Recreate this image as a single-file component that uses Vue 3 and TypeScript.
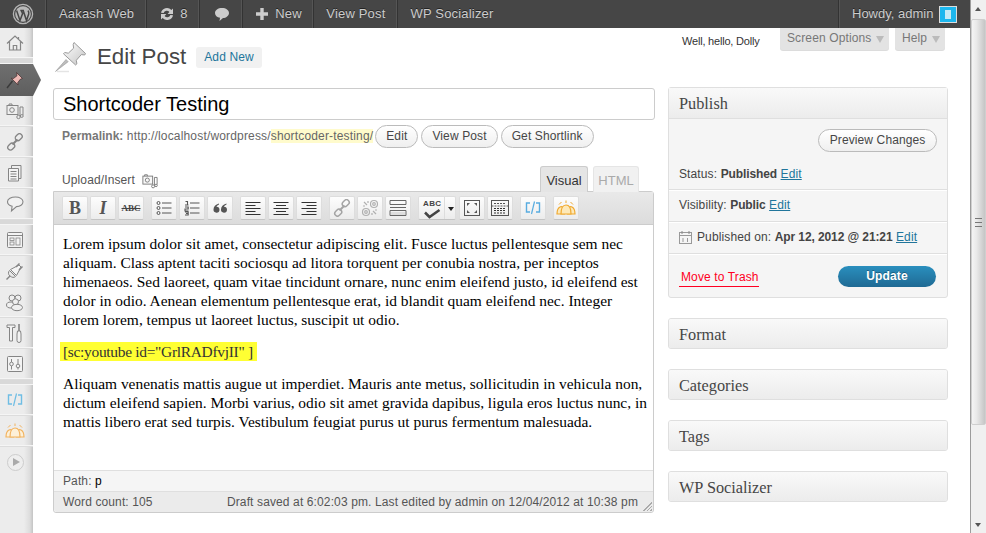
<script setup lang="ts">
const adminLinks: string[] = ['View Post', 'WP Socializer']
const boxes: string[] = ['Format', 'Categories', 'Tags', 'WP Socializer']
</script>

<template>
  <div class="shell">
    <div class="page">
      <header class="adminbar">
        <div class="ab-item ab-logo">
          <svg width="22" height="22" viewBox="0 0 22 22">
            <circle cx="11" cy="11" r="9.6" fill="none" stroke="#b5b5b5" stroke-width="1.3" />
            <circle cx="11" cy="11" r="7.8" fill="#b9b9b9" />
            <path d="M4.6 7.6 8 17.6l2.6-7-1.4-3.4M8.3 7.4h3.6M11.2 7.6l3.3 10 2.2-6.6c.5-1.6-.2-2.6-.7-3.4" fill="none" stroke="#464646" stroke-width="1.5" />
          </svg>
        </div>
        <div class="ab-item ab-site">Aakash Web</div>
        <div class="ab-item ab-updates">
          <svg width="16" height="16" viewBox="0 0 16 16">
            <path d="M2 6.8A6 6 0 0 1 12.4 4L14 2.4V8H8.6l1.8-1.9A3.3 3.3 0 0 0 4.6 7Z" fill="#ccc" />
            <path d="M14 9.2A6 6 0 0 1 3.6 12L2 13.6V8h5.4l-1.8 1.9A3.3 3.3 0 0 0 11.4 9Z" fill="#ccc" />
          </svg>
          <span>8</span>
        </div>
        <div class="ab-item ab-comments">
          <svg width="16" height="15" viewBox="0 0 16 15">
            <path d="M8 1c4 0 7 2.100 7 5s-3 5-6 5l-3.500 3 .5-3.200C3 10.300 1 8.500 1 6c0-2.900 3-5 7-5Z" fill="#ccc" />
          </svg>
        </div>
        <div class="ab-item ab-new">
          <svg width="12" height="12" viewBox="0 0 12 12"><path d="M4.300 0h3.400v4.300H12v3.400H7.700V12H4.300V7.700H0V4.300h4.300Z" fill="#ccc" /></svg>
          <span>New</span>
        </div>
        <div v-for="(link, i) in adminLinks" :key="link" class="ab-item" :class="{ 'ab-plain': i === adminLinks.length - 1 }">{{ link }}</div>
        <div class="ab-howdy">
          <span>Howdy, admin</span>
          <span class="avatar"><i></i></span>
        </div>
      </header>

      <div class="body-row">
        <nav class="menu">
          <div class="mi">
            <svg width="18" height="18" viewBox="0 0 18 18"><path d="M1 9.500 9 2l8 7.500M3.500 7.500V16h11V7.500M7.300 16v-4.500h3.400V16M12.500 3v2.500" fill="#efefef" stroke="#858585" stroke-width="1.200" /></svg>
          </div>
          <div class="mi-sep"></div>
          <div class="mi mi-active">
            <svg width="18" height="18" viewBox="0 0 18 18"><path d="M1 17 6.500 10" stroke="#3a3a3a" stroke-width="1.500" /><path d="M10.500 1.500 16.500 7.500l-2 .6-2.800 3.600.4 2.300-6.900-6.800 2.300.3 3.500-2.800Z" fill="#eeb9b5" stroke="#4b3535" stroke-width=".8" /></svg>
          </div>
          <div class="mi">
            <svg width="18" height="18" viewBox="0 0 18 18"><rect x="1" y="3.500" width="11" height="9" fill="#efefef" stroke="#858585" /><circle cx="6" cy="8" r="2.300" fill="none" stroke="#858585" /><path d="M3 3.500V2h3v1.500M14 5h3v8M14 5v9" fill="none" stroke="#858585" /><circle cx="12.500" cy="15" r="1.700" fill="none" stroke="#858585" /><circle cx="15.800" cy="14" r="1.400" fill="none" stroke="#858585" /></svg>
          </div>
          <div class="mi">
            <svg width="18" height="18" viewBox="0 0 18 18"><g fill="none" stroke="#858585" stroke-width="1.300"><rect x="9" y="1.500" width="7.500" height="5.400" rx="2.700" transform="rotate(-45 12.700 4.200)" /><rect x="1.500" y="11" width="7.500" height="5.400" rx="2.700" transform="rotate(-45 5.200 13.700)" /><path d="M6.500 11.500 11.500 6.500" stroke-width="2" /></g></svg>
          </div>
          <div class="mi">
            <svg width="18" height="18" viewBox="0 0 18 18"><path d="M5.500 4.500V1.500H15v13h-2.500" fill="#eee" stroke="#858585" /><path d="M2.500 4.500H12.500V17H2.500Z" fill="#f5f5f5" stroke="#858585" /><path d="M4.500 7.500h6M4.500 10h6M4.500 12.500h6M4.500 15h6" stroke="#858585" /></svg>
          </div>
          <div class="mi">
            <svg width="18" height="18" viewBox="0 0 18 18"><path d="M9.500 2c4.200 0 7.500 2 7.500 4.800s-3 4.800-6.500 4.800L5.500 16l.6-4.800C3.300 10.500 1.500 8.900 1.500 6.800 1.500 4 5.200 2 9.500 2Z" fill="#f1f1f1" stroke="#858585" stroke-width="1.100" /></svg>
          </div>
          <div class="mi-sep"></div>
          <div class="mi">
            <svg width="18" height="18" viewBox="0 0 18 18"><rect x="1.500" y="1.500" width="15" height="15" rx="1" fill="#f3f3f3" stroke="#858585" /><path d="M1.500 4.500h15" stroke="#858585" /><rect x="4" y="7" width="4" height="2.500" fill="none" stroke="#858585" stroke-width=".8" /><rect x="4" y="11" width="4" height="3" fill="none" stroke="#858585" stroke-width=".8" /><rect x="10" y="7" width="4" height="7" fill="none" stroke="#858585" stroke-width=".8" /></svg>
          </div>
          <div class="mi">
            <svg width="20" height="20" viewBox="0 0 20 20"><path d="M1.500 18.500 5 15" stroke="#858585" stroke-width="1.400" /><path d="M4.500 9.500 10.500 15.500C9 17 7 16.500 5 15S3 11 4.500 9.500Z" fill="#e9e9e9" stroke="#858585" /><path d="M5.500 8.500 14 4l2 2-4.500 8.500Z" fill="#f5f5f5" stroke="#858585" /><path d="M11 6 14.500 2.500M14 9l3.500-3.500" stroke="#858585" stroke-width="1.500" /></svg>
          </div>
          <div class="mi">
            <svg width="20" height="20" viewBox="0 0 20 20"><g fill="#efefef" stroke="#858585"><circle cx="7" cy="6" r="3" /><circle cx="13" cy="6" r="3" /><ellipse cx="6" cy="13" rx="4.500" ry="3" /><circle cx="10.500" cy="9.800" r="3" /><ellipse cx="12" cy="15.500" rx="5.500" ry="3.200" /></g></svg>
          </div>
          <div class="mi">
            <svg width="18" height="20" viewBox="0 0 18 20"><g fill="none" stroke="#858585"><path d="M1 2h8M1 2v2.500h2.500V18h3V4.500H9V2" fill="#f2f2f2" /><path d="M13 1v7" stroke-width="1.600" /><path d="M11.500 8h3l.5 3v6.500a2 2 0 0 1-4 0V11Z" fill="#f2f2f2" /></g></svg>
          </div>
          <div class="mi">
            <svg width="18" height="18" viewBox="0 0 18 18"><rect x="1.500" y="1.500" width="15" height="15" rx="1" fill="#f3f3f3" stroke="#858585" /><path d="M5.500 4v3M5.500 11v3.500M12 4v5M12 13v1.500" stroke="#858585" /><circle cx="5.500" cy="9" r="1.800" fill="none" stroke="#858585" /><circle cx="12" cy="11" r="1.800" fill="none" stroke="#858585" /></svg>
          </div>
          <div class="mi-sep"></div>
          <div class="mi">
            <svg width="16" height="14" viewBox="0 0 16 14"><path d="M5 2H1.500v9H5M11 2h3.500v9H11" fill="none" stroke="#6fbde4" stroke-width="1.400" /><path d="M6.500 13 9.500 .5" stroke="#6fbde4" stroke-width="1.200" /></svg>
          </div>
          <div class="mi">
            <svg width="20" height="16" viewBox="0 0 20 16"><g fill="#fdf0d8" stroke="#f2b35f" stroke-width="1.200"><path d="M1 14c0-4 .9-6 3-7s5 1 4.500 7Z" /><path d="M11.500 14c-.5-6 2.500-8 4.500-7s3 3 3 7Z" /><path d="M5 14c0-6 2-9 5-9s5 3 5 9Z" /></g><path d="M3 4.500 5.500 2M10 .5v2.500M17 4.500 14.500 2" stroke="#f2b35f" /></svg>
          </div>
          <div class="mi mi-collapse">
            <span class="collapse-dot"></span>
          </div>
        </nav>

        <main class="main">
          <section class="col-left">
            <div class="heading">
              <svg class="big-pin" width="32" height="32" viewBox="0 0 32 32">
                <defs>
                  <linearGradient id="pinSteel" x1="0" y1="0" x2="1" y2="1">
                    <stop offset="0" stop-color="#ffffff" />
                    <stop offset="1" stop-color="#c4c4c4" />
                  </linearGradient>
                </defs>
                <path d="M14 30.500H2" stroke="#e4e4e4" stroke-width="1.500" />
                <path d="M.5 30.500 11 18.500l2.200 2.200Z" fill="#bdbdbd" stroke="#8c8c8c" stroke-width=".5" />
                <path d="M19 1.500 30.500 12.500l-.8 1.500-3.400-.4-5 5.700.6 3.500-1.300 1.200L8.500 12.800l1.200-1.300 3.600.7 5.300-5-.4-3.700Z" fill="url(#pinSteel)" stroke="#9a9a9a" />
              </svg>
              <h1>Edit Post</h1>
              <a class="add-new">Add New</a>
            </div>

            <div class="title-input">Shortcoder Testing</div>

            <div class="permalink">
              <strong>Permalink:</strong>
              <span class="url">&nbsp;http://localhost/wordpress/<mark>shortcoder-testing/</mark></span>
              <a class="pill pill-first">Edit</a>
              <a class="pill">View Post</a>
              <a class="pill">Get Shortlink</a>
            </div>

            <div class="editor-tools">
              <div class="upload">
                <span>Upload/Insert</span>
                <svg width="16" height="16" viewBox="0 0 18 18"><rect x="1" y="3.500" width="11" height="9" fill="#f8f8f8" stroke="#777" /><circle cx="6" cy="8" r="2.300" fill="none" stroke="#777" /><path d="M3 3.500V2h3v1.500M14 5h3v8M14 5v9" fill="none" stroke="#777" /><circle cx="12.500" cy="15" r="1.700" fill="none" stroke="#777" /><circle cx="15.800" cy="14" r="1.400" fill="none" stroke="#777" /></svg>
              </div>
              <div class="tabs">
                <span class="tab tab-on">Visual</span>
                <span class="tab">HTML</span>
              </div>
            </div>

            <div class="editor">
              <div class="toolbar">
                <div class="tb-group">
                  <button class="tb tb-letter">B</button>
                  <button class="tb tb-letter tb-i">I</button>
                  <button class="tb tb-abc">ABC</button>
                </div>
                <div class="tb-group">
                  <button class="tb"><svg width="16" height="16" viewBox="0 0 16 16"><g fill="none" stroke="#555"><circle cx="2.500" cy="3" r="1.500" /><circle cx="2.500" cy="8" r="1.500" /><circle cx="2.500" cy="13" r="1.500" /><path d="M6 3h9.500M6 8h9.500M6 13h9.500" /></g></svg></button>
                  <button class="tb"><svg width="16" height="16" viewBox="0 0 16 16"><g fill="none" stroke="#555"><path d="M6 3h9.500M6 8h9.500M6 13h9.500" /><path d="M1.500 1.500h2v3M1 5h3.500M1 7h3.200v2H1v2h3.500M1 12h3.200v1.500H2M4.200 13.500V15H1" stroke-width="1.100" /></g></svg></button>
                  <button class="tb"><svg width="14" height="10" viewBox="0 0 14 10"><path d="M6 .5C2.500 1.500.5 3.500.5 6.500a3 3 0 1 0 3-2.800C3.800 2.700 4.800 2 6 1.500ZM13.500 .5C10 1.500 8 3.500 8 6.500a3 3 0 1 0 3-2.800c.3-1 1.300-1.700 2.500-2.200Z" fill="#555" /></svg></button>
                </div>
                <div class="tb-group">
                  <button class="tb"><svg width="16" height="15" viewBox="0 0 16 15"><path d="M.5 1.500h15M.5 4.500h10M.5 7.500h15M.5 10.500h10M.5 13.500h15" stroke="#333" /></svg></button>
                  <button class="tb"><svg width="16" height="15" viewBox="0 0 16 15"><path d="M.5 1.500h15M3 4.500h10M.5 7.500h15M3 10.500h10M.5 13.500h15" stroke="#333" /></svg></button>
                  <button class="tb"><svg width="16" height="15" viewBox="0 0 16 15"><path d="M.5 1.500h15M5.500 4.500h10M.5 7.500h15M5.500 10.500h10M.5 13.500h15" stroke="#333" /></svg></button>
                </div>
                <div class="tb-group">
                  <button class="tb"><svg width="18" height="18" viewBox="0 0 18 18"><g fill="none" stroke="#a4a4a4" stroke-width="1.500"><rect x="9" y="1.500" width="7.500" height="5.400" rx="2.700" transform="rotate(-45 12.700 4.200)" /><rect x="1.500" y="11" width="7.500" height="5.400" rx="2.700" transform="rotate(-45 5.200 13.700)" /><path d="M6.500 11.500 11.500 6.500" stroke-width="2" /></g></svg></button>
                  <button class="tb"><svg width="18" height="18" viewBox="0 0 18 18"><g fill="none" stroke="#b0b0b0" stroke-width="1.200"><circle cx="13" cy="5" r="3.500" /><circle cx="13" cy="5" r="1.300" /><circle cx="5" cy="13" r="3.500" /><circle cx="5" cy="13" r="1.300" /><path d="M3 3l3 3M15 15l-3-3M7 2v2M2 7h2M11 16v-2M16 11h-2" /></g></svg></button>
                  <button class="tb"><svg width="18" height="16" viewBox="0 0 18 16"><path d="M1 .5h16M1 4.500h16M1 .5v4M17 .5v4M1 7.500h16M1 10.500h16M1 15.500h16M1 10.500v5M17 10.500v5" fill="none" stroke="#666" /><path d="M2 12h14v3H2Z" fill="#ddd" /></svg></button>
                </div>
                <div class="tb-group tb-group-wide">
                  <div class="tb-split">
                    <span class="tb-spell">
                      <svg width="18" height="18" viewBox="0 0 18 18"><path d="M2 11.500 6.500 16 16.500 9" fill="none" stroke="#444" stroke-width="2.500" /></svg>
                      <em>ABC</em>
                    </span>
                    <span class="tb-drop"></span>
                  </div>
                  <button class="tb"><svg width="16" height="16" viewBox="0 0 16 16"><rect x=".5" y=".5" width="15" height="15" fill="none" stroke="#555" /><path d="M3 3h3L3 6ZM13 3v3l-3-3ZM3 13v-3l3 3ZM13 13h-3l3-3Z" fill="#555" /></svg></button>
                  <button class="tb"><svg width="18" height="16" viewBox="0 0 18 16"><rect x=".5" y=".5" width="17" height="15" fill="none" stroke="#555" /><path d="M3 3.500h12M.5 6h17" stroke="#555" stroke-dasharray="2 1" /><path d="M3 8.500h12M3 10.500h12M3 13h12" stroke="#333" stroke-dasharray="2 1" /></svg></button>
                </div>
                <div class="tb-group">
                  <button class="tb"><svg width="16" height="14" viewBox="0 0 16 14"><path d="M5 2H1.500v9H5M11 2h3.500v9H11" fill="none" stroke="#58ace0" stroke-width="1.400" /><path d="M6.500 13 9.500 .5" stroke="#58ace0" stroke-width="1.200" /></svg></button>
                </div>
                <div class="tb-group">
                  <button class="tb"><svg width="20" height="18" viewBox="0 0 20 16"><g fill="#fde9b9" stroke="#f0a92f" stroke-width="1.200"><path d="M1 14c0-4 .9-6 3-7s5 1 4.500 7Z" /><path d="M11.500 14c-.5-6 2.500-8 4.500-7s3 3 3 7Z" /><path d="M5 14c0-6 2-9 5-9s5 3 5 9Z" /></g><path d="M3 4.500 5.500 2M10 .5v2.500M17 4.500 14.500 2" stroke="#f0a92f" /></svg></button>
                </div>
              </div>
              <div class="content">
                <p>Lorem ipsum dolor sit amet, consectetur adipiscing elit. Fusce luctus pellentesque sem nec<br>aliquam. Class aptent taciti sociosqu ad litora torquent per conubia nostra, per inceptos<br>himenaeos. Sed laoreet, quam vitae tincidunt ornare, nunc enim eleifend justo, id eleifend est<br>dolor in odio. Aenean elementum pellentesque erat, id blandit quam eleifend nec. Integer<br>lorem lorem, tempus ut laoreet luctus, suscipit ut odio.</p>
                <p class="code"><span>[sc:youtube id="GrlRADfvjII" ]</span></p>
                <p>Aliquam venenatis mattis augue ut imperdiet. Mauris ante metus, sollicitudin in vehicula non,<br>dictum eleifend sapien. Morbi varius, odio sit amet gravida dapibus, ligula eros luctus nunc, in<br>mattis libero erat sed turpis. Vestibulum feugiat purus ut purus fermentum malesuada.</p>
              </div>
              <div class="path">Path: <b>p</b></div>
              <div class="count">
                <span>Word count: 105</span>
                <span>Draft saved at 6:02:03 pm. Last edited by admin on 12/04/2012 at 10:38 pm</span>
                <i class="grip"></i>
              </div>
            </div>
          </section>

          <aside class="col-right">
            <div class="meta-strip">
              <span class="dolly">Well, hello, Dolly</span>
              <span class="meta-tab meta-opts">Screen Options<i></i></span>
              <span class="meta-tab meta-help">Help<i></i></span>
            </div>

            <div class="box publish">
              <h3>Publish</h3>
              <div class="pub-preview"><a class="pill pill-wide">Preview Changes</a></div>
              <div class="pub-row pub-status">Status: <b>Published</b> <a>Edit</a></div>
              <div class="pub-row">Visibility: <b>Public</b> <a>Edit</a></div>
              <div class="pub-row pub-date">
                <svg width="13" height="13" viewBox="0 0 13 13"><rect x=".5" y="1.500" width="12" height="11" fill="#f5f5f5" stroke="#999" /><path d="M.5 4.500h12" stroke="#999" /><path d="M3 0v3M10 0v3" stroke="#888" /><path d="M4 7v4M8.500 7v4" stroke="#999" /></svg>
                <span>Published on: <b>Apr 12, 2012 @ 21:21</b> <a>Edit</a></span>
              </div>
              <div class="pub-actions">
                <a class="trash">Move to Trash</a>
                <a class="update">Update</a>
              </div>
            </div>

            <div v-for="box in boxes" :key="box" class="box closed"><h3>{{ box }}</h3></div>
          </aside>
        </main>
      </div>
    </div>

    <div class="scrollbar">
      <i class="arrow-up"></i>
      <div class="thumb"><span></span></div>
      <i class="arrow-down"></i>
    </div>
  </div>
</template>

<style>
html, body { margin: 0; background: #fff; overflow: hidden; }
</style>

<style scoped>
.shell { display: flex; width: 986px; height: 533px; overflow: hidden; background: #fff; font: 12px/1.4 "Liberation Sans", Arial, sans-serif; letter-spacing: .12px; color: #333; }
.page { width: 970px; display: flex; flex-direction: column; flex: none; }

.adminbar { height: 28px; display: flex; background: #464646; color: #ccc; font-size: 13px; letter-spacing: .18px; text-shadow: 0 -1px 0 rgba(0,0,0,.5); flex: none; }
.ab-item { height: 28px; padding: 0 12px; display: flex; align-items: center; gap: 6px; border-right: 1px solid #333; box-shadow: inset -1px 0 0 #555; line-height: 28px; }
.ab-plain { border-right: 0; box-shadow: none; }
.ab-logo { width: 47px; box-sizing: border-box; padding: 0 0 0 12px; }
.ab-updates { width: 53px; box-sizing: border-box; padding: 0 0 0 12px; gap: 5px; }
.ab-comments { width: 43px; box-sizing: border-box; padding: 0 0 0 14px; }
.ab-new { width: 71px; box-sizing: border-box; padding: 0 0 0 13px; gap: 7px; }
.ab-howdy { margin-left: auto; width: 132px; box-sizing: border-box; padding-left: 13px; border-left: 1px solid #333; box-shadow: inset 1px 0 0 #555; display: flex; align-items: center; letter-spacing: 0; white-space: nowrap; }
.avatar { width: 18px; height: 17px; box-sizing: border-box; margin-left: 6px; border: 1px solid #ddd; background: #1db7ee; display: flex; align-items: center; justify-content: center; }
.avatar i { width: 6px; height: 9px; background: #c6ebf6; }

.body-row { display: flex; flex: 1; min-height: 0; }

.menu { width: 33px; flex: none; display: flex; flex-direction: column; background: linear-gradient(90deg, #ececec 0, #ececec 24px, #dcdcdc 30px, #c4c4c4 33px); position: relative; }
.mi { height: 31px; flex: none; display: flex; align-items: center; justify-content: center; padding-right: 3px; box-sizing: border-box; border-bottom: 1px solid #dcdcdc; box-shadow: inset 0 -1px 0 #f5f5f5; }
.mi-sep { height: 5px; flex: none; background: #d9d9d9; border-bottom: 1px solid #f5f5f5; box-sizing: border-box; }
.mi-active { height: 32px; width: 41px; position: relative; background: linear-gradient(#6f6f6f, #5e5e5e); clip-path: polygon(0 0, 33px 0, 41px 50%, 33px 100%, 0 100%); border: 0; box-shadow: none; padding-right: 11px; z-index: 1; }
.mi-collapse { border: 0; box-shadow: none; }
.collapse-dot { width: 15px; height: 15px; border-radius: 50%; border: 1px solid #ccc; background: #eee; position: relative; }
.collapse-dot::after { content: ""; position: absolute; left: 5px; top: 3px; border-left: 7px solid #aaa; border-top: 4.500px solid transparent; border-bottom: 4.500px solid transparent; }

.main { flex: 1; display: flex; gap: 13px; padding-left: 20px; min-width: 0; }
.col-left { width: 602px; flex: none; padding-top: 14px; }
.col-right { width: 280px; flex: none; }

.heading { display: flex; align-items: center; height: 30px; padding-left: 2px; }
.big-pin { flex: none; }
h1 { margin: 0 0 0 10px; font-size: 22.300px; font-weight: 400; color: #464646; line-height: 30px; letter-spacing: 0; }
.add-new { margin: 0 0 0 10px; padding: 0 8px; height: 21px; line-height: 21px; background: #f1f1f1; border-radius: 3px; color: #21759b; font-size: 12px; }

.title-input { margin-top: 16px; height: 32px; box-sizing: border-box; border: 1px solid #ccc; border-radius: 3px; padding: 0 9px; font-size: 20px; line-height: 31px; letter-spacing: 0; color: #000; }

.permalink { margin-top: 5px; height: 23px; display: flex; align-items: center; padding-left: 9px; color: #666; font-size: 12px; white-space: nowrap; }
.permalink strong { color: #777; letter-spacing: 0; }
.url { letter-spacing: .165px; }
.permalink mark { background: #fffbcc; color: #666; }
.pill { height: 23px; box-sizing: border-box; line-height: 21px; padding: 0 10px; border: 1px solid #bbb; border-radius: 12px; background: linear-gradient(#fff, #efefef); color: #464646; font-size: 12px; margin-left: 3px; white-space: nowrap; }
.pill-first { margin-left: 2px; }
.pill-wide { padding: 0 10.500px; }

.editor-tools { margin-top: 18px; height: 26px; display: flex; justify-content: space-between; align-items: flex-end; position: relative; z-index: 1; margin-bottom: -1px; padding-left: 9px; }
.upload { display: flex; align-items: center; gap: 7px; height: 26px; color: #555; padding-top: 3px; box-sizing: border-box; }
.tabs { display: flex; gap: 5px; padding-right: 16px; }
.tab { width: 46px; height: 26px; box-sizing: border-box; text-align: center; line-height: 27px; border: 1px solid #e5e5e5; border-bottom: 0; border-radius: 3px 3px 0 0; background: #f1f1f1; color: #aaa; font-size: 13px; letter-spacing: 0; }
.tab-on { width: 48px; background: #e5e5e5; border-color: #ccc #ccc #e5e5e5; color: #333; }

.editor { width: 601px; height: 322px; box-sizing: border-box; border: 1px solid #ccc; border-radius: 0 3px 3px 3px; display: flex; flex-direction: column; }
.toolbar { height: 33px; flex: none; box-sizing: border-box; display: flex; gap: 7px; padding: 4px 0 0 8px; background: linear-gradient(#e9e9e9, #dcdcdc); border-bottom: 1px solid #ccc; }
.tb-group { display: flex; gap: 2px; }
.tb { width: 26px; height: 24px; padding: 0; border: 1px solid #ddd; border-bottom-color: #c4c4c4; border-radius: 2px; background: linear-gradient(#fdfdfd, #ececec); display: flex; align-items: center; justify-content: center; font-family: "Liberation Serif", serif; color: #555; }
.tb-letter { font-size: 18px; font-weight: 700; line-height: 1; }
.tb-i { font-style: italic; }
.tb-abc { font-size: 9px; font-weight: 700; text-decoration: line-through; font-family: "Liberation Serif", serif; color: #444; }
.tb-split { width: 38px; height: 24px; box-sizing: border-box; display: flex; border: 1px solid #ddd; border-bottom-color: #c4c4c4; border-radius: 2px; background: linear-gradient(#fdfdfd, #ececec); margin-right: 1px; }
.tb-spell { width: 25px; position: relative; display: flex; align-items: flex-end; justify-content: center; border-right: 1px solid #ddd; }
.tb-spell em { position: absolute; top: 3px; left: 4px; font: 700 8px/1 "Liberation Sans", sans-serif; letter-spacing: .4px; color: #444; }
.tb-drop { flex: 1; position: relative; }
.tb-drop::after { content: ""; position: absolute; left: 3px; top: 10px; border: 3.500px solid transparent; border-top: 4px solid #222; border-bottom: 0; }

.content { flex: 1; background: #fff; padding: 9px 9px 0; font: 15.450px/19px "Liberation Serif", "Times New Roman", serif; letter-spacing: 0; color: #000; white-space: nowrap; overflow: hidden; }
.content p { margin: 0 0 13px; }
.code { margin-left: -3px !important; width: 197px; background: #ffff33; height: 19px; padding-left: 3px; box-sizing: border-box; color: #333; letter-spacing: -.3px; }

.path { height: 21px; flex: none; box-sizing: border-box; line-height: 21px; padding-left: 9px; background: #f5f5f5; border-top: 1px solid #dfdfdf; color: #555; }
.path b { font-weight: 400; color: #000; }
.count { height: 21px; flex: none; box-sizing: border-box; display: flex; justify-content: space-between; line-height: 20px; padding: 0 15px 0 9px; background: #ebebeb; border-top: 1px solid #dfdfdf; color: #555; position: relative; border-radius: 0 0 3px 3px; }
.grip { position: absolute; right: 1px; bottom: 1px; width: 11px; height: 11px; background: repeating-linear-gradient(135deg, transparent 0 1.500px, #aaa 1.500px 2.500px); clip-path: polygon(100% 0, 100% 100%, 0 100%); }

.meta-strip { height: 22px; display: flex; padding-left: 14px; }
.dolly { font-size: 11px; color: #333; width: 98px; padding-top: 6px; line-height: 15px; letter-spacing: -.2px; white-space: nowrap; }
.meta-tab { height: 22px; box-sizing: border-box; background: #e3e3e3; border-radius: 0 0 3px 3px; box-shadow: 0 1px 0 #dcdcdc; color: #777; font-size: 12px; line-height: 20px; padding-left: 7px; position: relative; }
.meta-tab i { position: absolute; right: 5px; top: 8px; border: 4px solid transparent; border-top: 7px solid #bbb; border-bottom: 0; }
.meta-opts { width: 109px; }
.meta-help { width: 50px; margin-left: 6px; }

.box { border: 1px solid #dfdfdf; border-radius: 3px; background: #f5f5f5; box-sizing: border-box; }
.box h3 { margin: 0; font: 400 16.300px/32px "Liberation Serif", "Times New Roman", serif; letter-spacing: 0; color: #464646; padding-left: 10px; height: 30px; background: linear-gradient(#f9f9f9, #ececec); }
.closed { height: 31px; margin-top: 20px; }
.closed h3 { height: 29px; border-radius: 2px; }
.publish { margin-top: 37px; height: 211px; }
.publish h3 { line-height: 31px; border-bottom: 1px solid #dfdfdf; }
.pub-preview { display: flex; justify-content: flex-end; padding: 10px 10px 0 0; height: 33px; }
.pub-row { padding-left: 10px; height: 32px; box-sizing: border-box; line-height: 31px; border-bottom: 1px solid #dfdfdf; box-shadow: 0 1px 0 #fff; color: #444; }
.pub-row b { letter-spacing: -.1px; }
.pub-status { height: 28px; line-height: 24px; }
.pub-row a { color: #21759b; text-decoration: underline; }
.pub-date { display: flex; align-items: center; gap: 5px; }
.pub-actions { display: flex; justify-content: space-between; padding: 12px 11px 0 10px; }
.trash { color: #ff0022; border-bottom: 1px solid #ff0022; height: 21px; box-sizing: border-box; line-height: 23px; padding: 0 2px; width: 80px; white-space: nowrap; }
.update { width: 98px; height: 21px; line-height: 20px; text-align: center; border-radius: 11px; background: linear-gradient(#2a8fbe, #1f6a94); color: #fff; font-weight: 700; text-shadow: 0 -1px 0 rgba(0,0,0,.3); }

.scrollbar { width: 16px; flex: none; box-sizing: border-box; border-left: 1px solid #9c9c9c; background: #f0f0f0; position: relative; }
.arrow-up { position: absolute; left: 4px; top: 7px; border: 3.500px solid transparent; border-bottom: 4px solid #555; border-top: 0; }
.arrow-down { position: absolute; left: 4px; bottom: 6px; border: 3.500px solid transparent; border-top: 4px solid #555; border-bottom: 0; }
.thumb { position: absolute; left: 0; top: 19px; width: 15px; height: 406px; box-sizing: border-box; background: linear-gradient(90deg, #f4f4f4, #e9e9e9 35%, #c5c5c5); border: 1px solid #cfcfcf; border-radius: 2px; display: flex; align-items: center; justify-content: center; }
.thumb span { width: 7px; height: 7px; border-top: 1px solid #777; border-bottom: 1px solid #777; background: linear-gradient(#777, #777) center / 100% 1px no-repeat; }
</style>
